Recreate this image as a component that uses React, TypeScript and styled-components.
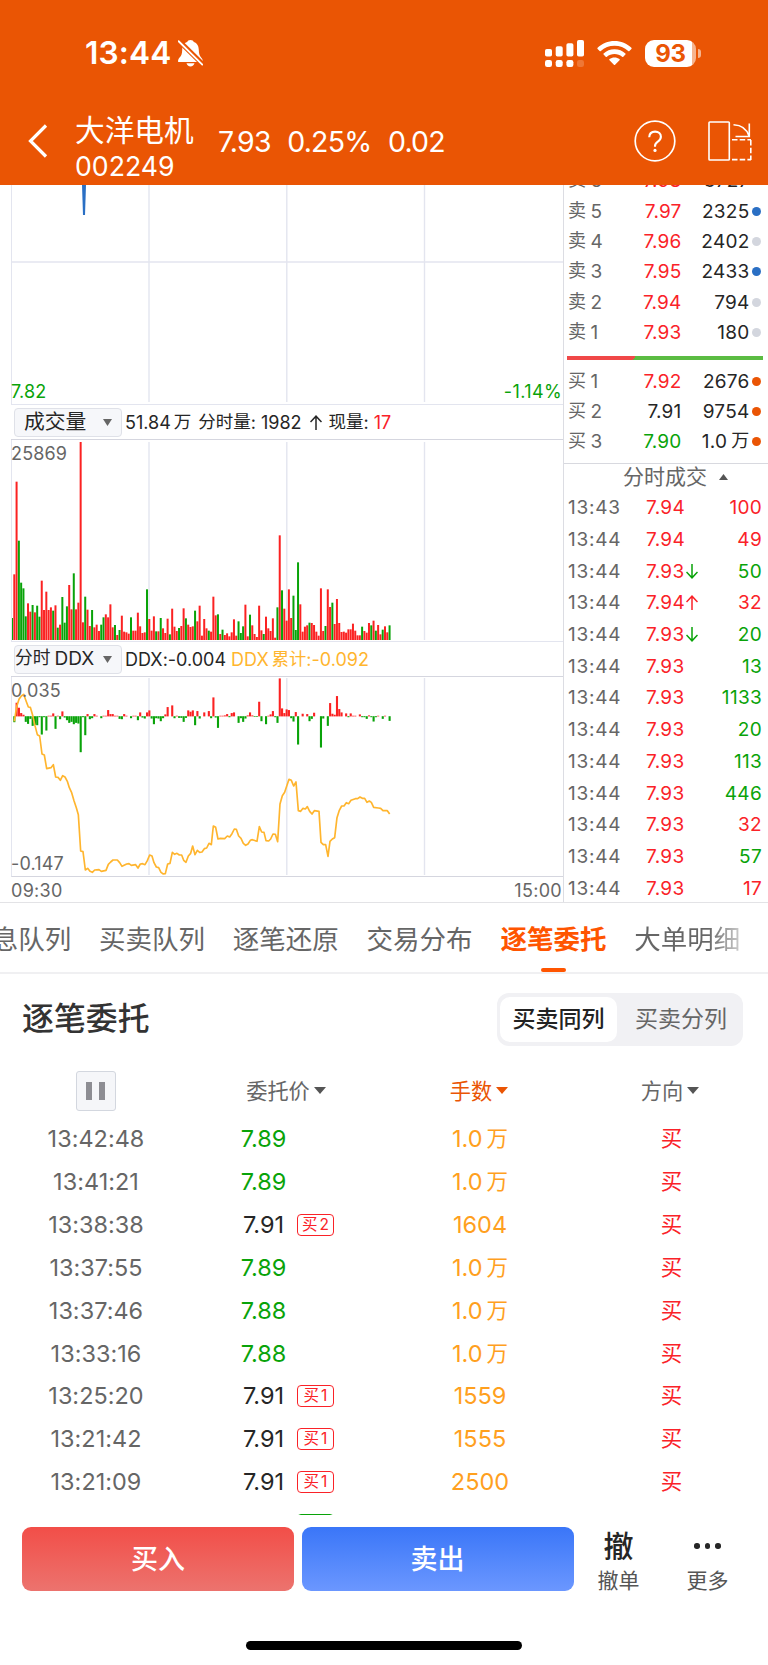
import React from "react";
import styled, { createGlobalStyle } from "styled-components";

const RED = "#fa2228";
const GREEN = "#09a309";
const GREY = "#666666";
const INK = "#262626";
const ORANGE = "#ea5504";
const AMBER = "#ffa01e";
const GRID = "#e3e5ef";

const GlobalStyle = createGlobalStyle`
  * { box-sizing: border-box; }
  body {
    margin: 0;
    background: #fff;
    color: ${INK};
    font-family: Inter, "Noto Sans CJK SC", sans-serif;
    font-feature-settings: "calt" 0;
  }
`;

const Screen = styled.div`
  width: 768px;
  height: 1665px;
  overflow: hidden;
  display: flex;
  flex-direction: column;
  background: #fff;
  white-space: nowrap;
`;

/* ---------- header ---------- */

const Header = styled.header`
  height: 185px;
  flex: none;
  background: ${ORANGE};
  color: #fff;
`;

const StatusBar = styled.div`
  height: 105px;
  padding: 1px 67px 0 85px;
  display: flex;
  align-items: center;
`;

const Clock = styled.div`
  font-size: 31.7px;
  font-weight: 600;
  letter-spacing: 0.1px;
  line-height: 40px;
  width: 93px;
`;

const StatusIcons = styled.div`
  margin-left: auto;
  display: flex;
  align-items: center;
  gap: 13px;
`;

const Battery = styled.div`
  display: flex;
  align-items: center;
  gap: 2px;
`;

const BatteryBody = styled.div`
  width: 51px;
  height: 27px;
  border-radius: 9px;
  background: linear-gradient(90deg, #fff 47px, #f6b48e 47px);
  color: ${ORANGE};
  font-size: 24px;
  font-weight: 700;
  line-height: 27px;
  text-align: center;
  letter-spacing: -0.4px;
`;

const BatteryTip = styled.div`
  width: 3px;
  height: 9px;
  border-radius: 0 4px 4px 0;
  background: #f6b48e;
`;

const TitleBar = styled.div`
  height: 80px;
  padding: 0 16px 0 28px;
  display: flex;
  align-items: flex-start;
`;

const Back = styled.div`
  width: 47px;
  padding-top: 19px;
  line-height: 0;
`;

const StockName = styled.div`
  width: 143px;
  padding-top: 6px;
`;

const NameText = styled.div`
  font-size: 29.7px;
  line-height: 36px;
  font-family: "Noto Sans CJK SC", sans-serif;
  font-weight: 400;
`;

const CodeText = styled.div`
  font-size: 26.7px;
  line-height: 32px;
  margin-top: 3px;
`;

const QuoteLine = styled.div`
  display: flex;
  gap: 16.3px;
  padding-top: 19px;
  font-size: 28.5px;
  letter-spacing: -0.75px;
  line-height: 36px;
`;

const HeaderActions = styled.div`
  margin-left: auto;
  display: flex;
  gap: 32px;
  padding-top: 15px;
`;

/* ---------- market panel ---------- */

const Market = styled.section`
  height: 718px;
  flex: none;
  display: flex;
  border-bottom: 1px solid #e3e3e6;
  overflow: hidden;
`;

const Charts = styled.div`
  width: 563px;
  padding-left: 11px;
  display: flex;
  flex-direction: column;
`;

const ChartBox = styled.div<{ $h: number; $line?: string }>`
  position: relative;
  height: ${(p) => p.$h}px;
  flex: none;
  border-left: 1px solid ${GRID};
  border-bottom: 1px solid ${(p) => p.$line || GRID};
  svg { display: block; }
`;

const ChartLabel = styled.span<{ $v: "top" | "bottom"; $right?: boolean; $color?: string }>`
  position: absolute;
  ${(p) => (p.$right ? "right: 1px;" : "left: -1px;")}
  ${(p) => (p.$v === "top" ? "top: 3px;" : "bottom: 1px;")}
  font-size: 18px;
  line-height: 22px;
  letter-spacing: ${(p) => (p.$right ? 0.4 : 0.15)}px;
  color: ${(p) => p.$color || GREY};
`;

const IndicatorBar = styled.div`
  height: 35px;
  flex: none;
  display: flex;
  align-items: center;
  border-bottom: 1px solid #d5d6df;
  font-size: 18px;
`;

const IndicatorSelect = styled.div<{ $size: number; $pad: number }>`
  width: 108px;
  height: 29px;
  margin: 0 3px 0 3px;
  padding: 0 9px 0 ${(p) => p.$pad}px;
  display: flex;
  align-items: center;
  justify-content: space-between;
  border: 1px solid #dfe1e8;
  border-radius: 4px;
  background: #f6f7fa;
  font-size: ${(p) => p.$size}px;
  line-height: 26px;
`;

const Cjk = styled.span<{ $size?: number; $ml?: number }>`
  font-size: ${(p) => (p.$size ? p.$size + "px" : "inherit")};
  margin-left: ${(p) => p.$ml || 0}px;
  vertical-align: 1px;
  line-height: 1;
`;

const Spaced = styled.span<{ $ml: number }>`
  margin-left: ${(p) => p.$ml}px;
`;

const IndicatorText = styled.span<{ $color?: string; $gap?: number }>`
  color: ${(p) => p.$color || INK};
  margin-right: ${(p) => p.$gap || 0}px;
`;

const TimeAxis = styled.div`
  height: 26px;
  display: flex;
  justify-content: space-between;
  padding-right: 1px;
  font-size: 18px;
  line-height: 27px;
  letter-spacing: 0.3px;
  color: ${GREY};
`;

const SidePanel = styled.aside`
  width: 205px;
  border-left: 1px solid #dcdde3;
  overflow: hidden;
`;

const Book = styled.div`
  height: 279px;
  overflow: hidden;
  border-bottom: 1px solid #d8d9df;
`;

const Asks = styled.div`
  margin-top: -19.3px;
`;

const BookRow = styled.div`
  height: 30.35px;
  display: flex;
  align-items: center;
  padding: 0 7px 0 4px;
  font-size: 19px;
`;

const BookLabel = styled.span`
  width: 51px;
  color: ${GREY};
`;

const BookPrice = styled.span<{ $color: string }>`
  width: 62.5px;
  text-align: right;
  letter-spacing: 0.2px;
  color: ${(p) => p.$color};
`;

const BookVolume = styled.span`
  flex: 1;
  text-align: right;
  margin-right: 2.5px;
  letter-spacing: 0.25px;
`;

const Dot = styled.i<{ $color: string }>`
  width: 9px;
  height: 9px;
  border-radius: 50%;
  background: ${(p) => p.$color};
`;

const RatioBar = styled.div`
  height: 4px;
  margin: 8.7px 5px 5.6px 3px;
  background: linear-gradient(130deg, #f04848 34.5%, #5bbc42 34.5%);
`;

const TradesTitle = styled.div`
  height: 27px;
  display: flex;
  align-items: center;
  gap: 12px;
  padding: 0 0 2px 59px;
  font-size: 21px;
  line-height: 25px;
  color: ${GREY};
`;

const TradeRow = styled.div`
  height: 31.7px;
  display: flex;
  align-items: center;
  padding: 2px 6px 0 4px;
  font-size: 19px;
`;

const TradeTime = styled.span`
  width: 78px;
  color: ${GREY};
  letter-spacing: 0.75px;
`;

const TradePrice = styled.span`
  width: 56px;
  display: flex;
  align-items: center;
  gap: 1.5px;
  letter-spacing: 0.3px;
  color: ${RED};
`;

const TradeVolume = styled.span<{ $color: string }>`
  flex: 1;
  text-align: right;
  letter-spacing: 0.3px;
  color: ${(p) => p.$color};
`;

/* ---------- tabs ---------- */

const Tabs = styled.nav`
  height: 71px;
  flex: none;
  display: flex;
  gap: 27.8px;
  padding-left: 99px;
  border-bottom: 2px solid #f0f0f2;
  overflow: hidden;
`;

const Tab = styled.div<{ $active?: boolean; $fade?: boolean; $first?: boolean }>`
  display: flex;
  flex-direction: column;
  align-items: center;
  font-size: 26.5px;
  line-height: 65px;
  flex: none;
  margin-left: ${(p) => (p.$first ? "-133.8px" : "0")};
  color: ${(p) => (p.$active ? "#ff5500" : GREY)};
  font-weight: ${(p) => (p.$active ? 700 : 400)};
  ${(p) => p.$fade && "background: linear-gradient(90deg, #666 70%, #ccc 100%); background-clip: text; color: transparent; -webkit-text-fill-color: transparent;"}
  padding-top: 4px;
`;

const Underline = styled.i`
  width: 25px;
  height: 4px;
  margin-top: -4px;
  border-radius: 2px;
  background: #ff5500;
`;

/* ---------- order list ---------- */

const Orders = styled.section`
  height: 541px;
  flex: none;
  overflow: hidden;
`;

const OrdersHead = styled.div`
  height: 90px;
  display: flex;
  align-items: center;
  justify-content: space-between;
  padding: 0 25px 0 22px;
`;

const OrdersTitle = styled.h2`
  margin: 0;
  font-size: 31.9px;
  font-weight: 500;
  line-height: 44px;
  color: #333;
`;

const Segment = styled.div`
  display: flex;
  width: 246px;
  height: 53px;
  padding: 4px 3px;
  border-radius: 12px;
  background: #f1f1f4;
`;

const SegmentItem = styled.div<{ $on?: boolean }>`
  width: ${(p) => (p.$on ? "117px" : "123px")};
  padding-left: ${(p) => (p.$on ? 0 : 5)}px;
  border-radius: 10px;
  background: ${(p) => (p.$on ? "#fff" : "transparent")};
  color: ${(p) => (p.$on ? "#222" : GREY)};
  font-weight: ${(p) => (p.$on ? 500 : 400)};
  font-size: 23px;
  line-height: 44px;
  text-align: center;
`;

const Columns = styled.div`
  display: grid;
  grid-template-columns: 192px 192px 192px 192px;
  align-items: center;
`;

const HeadRow = styled(Columns)`
  height: 53px;
  font-size: 21.2px;
  line-height: 30px;
  color: ${GREY};
`;

const HeadCell = styled.div<{ $active?: boolean; $shift?: number }>`
  display: flex;
  align-items: center;
  justify-content: center;
  gap: 4px;
  padding-right: ${(p) => p.$shift || 0}px;
  color: ${(p) => (p.$active ? ORANGE : GREY)};
`;

const PauseButton = styled.div`
  width: 40px;
  height: 40px;
  border: 1px solid #d3d7df;
  border-radius: 3px;
  background: #f5f6f9;
  display: flex;
  align-items: center;
  justify-content: center;
  gap: 7px;
`;

const PauseStroke = styled.i`
  width: 6px;
  height: 18px;
  background: #8d8d93;
`;

const OrderRow = styled(Columns)`
  height: 42.85px;
  padding-top: 2px;
  font-size: 23.5px;
  line-height: 30px;
`;

const TimeCell = styled.div`
  text-align: center;
  color: ${GREY};
  font-size: 23.4px;
  letter-spacing: 0.05px;
`;

const PriceCell = styled.div<{ $color: string }>`
  display: flex;
  align-items: center;
  color: ${(p) => p.$color};
`;

const Price = styled.span`
  width: 143px;
  text-align: center;
`;

const Badge = styled.b<{ $color: string }>`
  width: 37px;
  height: 22px;
  margin-left: -38px;
  flex: none;
  border: 1px solid ${(p) => p.$color};
  border-radius: 4px;
  color: ${(p) => p.$color};
  font-size: 15.5px;
  font-weight: 400;
  line-height: 20px;
  text-align: center;
`;

const LotsCell = styled.div`
  padding-left: 0;
  text-align: center;
  color: ${AMBER};
`;

const SideCell = styled.div`
  padding: 0 1px 2px 0;
  text-align: center;
  font-size: 21.5px;
  color: ${RED};
`;

/* ---------- bottom bar ---------- */

const BottomBar = styled.footer`
  height: 100px;
  flex: none;
  padding: 12px 0 0 22px;
  display: flex;
`;

const ActionButton = styled.div<{ $from: string; $to: string }>`
  width: 272px;
  height: 64px;
  margin-right: 7.5px;
  border-radius: 9px;
  background: linear-gradient(180deg, ${(p) => p.$from}, ${(p) => p.$to});
  color: #fff;
  font-size: 27px;
  font-weight: 500;
  line-height: 66px;
  text-align: center;
`;

const SmallAction = styled.div`
  width: 89px;
  display: flex;
  flex-direction: column;
  align-items: center;
  font-size: 21px;
  line-height: 32px;
  color: #555;
`;

const SmallActions = styled.div`
  display: flex;
  margin-left: -7px;
`;

const SmallIcon = styled.div`
  height: 38px;
  display: flex;
  align-items: center;
  gap: 5px;
  font-size: 30px;
  font-weight: 500;
  color: ${INK};
`;

const MoreDot = styled.i`
  width: 5.5px;
  height: 5.5px;
  border-radius: 50%;
  background: ${INK};
`;

const HomeArea = styled.div`
  flex: 1;
  display: flex;
  justify-content: center;
  padding-top: 26px;
`;

const HomeIndicator = styled.div`
  width: 276px;
  height: 9px;
  border-radius: 5px;
  background: #000;
`;

/* ---------- data ---------- */

// Minute volumes, 594 = the day's peak; a negative sign marks a falling minute.
const VOLUMES = [
  -66, 197, 475, -298, -172, -155, -71, 110, 85, -105, 83, -103, -70, 178, 90, 145, 90, 98, -88, 104,
  -37, 46, -129, -52, -101, 165, 92, -200, 92, 112, 594, 53, -130, 91, 42, -90, 38, 46, 27, -46,
  -68, 77, 68, 107, 38, -45, 15, -30, 73, 25, 23, 19, -68, 28, 28, 82, 41, 21, 23, -152,
  63, 28, 71, -26, 26, -66, 35, 21, 64, -17, 94, 40, 27, -36, 42, 95, -65, 46, 39, 41,
  -88, 56, 103, 13, 63, 35, -28, 25, 130, 74, -77, 18, -31, 15, 20, 11, 23, 62, 13, -56,
  -21, -41, 106, 11, -76, 44, 18, 9, 103, 29, -18, 70, 35, 27, 65, 7, -98, 314, -149, 94,
  58, 152, 66, -133, -30, -233, 107, 25, 40, 44, -52, 51, 45, 25, 13, 155, 27, -42, 152, 99,
  -112, 48, 123, 51, 24, 25, 22, 32, 32, 49, 28, 14, 14, -40, 27, 22, 51, -44, 58, -28,
  45, 17, -31, 41, 23, -44,
];

// Per-minute DDX as [minute, value].
const DDX: [number, number][] = [
  [1, -18], [2, 41], [3, 26], [4, 10], [5, 5], [6, -17], [7, -23], [8, -8], [9, -29], [10, -26], [11, -27],
  [12, -3], [13, -55], [14, -3], [15, -43], [16, 2], [17, 2], [18, 9], [19, -38], [20, 2], [21, -9], [22, 15],
  [23, -4], [24, -12], [25, -20], [26, -17], [27, -24], [28, -20], [29, -22], [30, -108], [31, -3], [32, -57],
  [33, 7], [34, -9], [35, -6], [36, 7], [37, 2], [39, -6], [40, 2], [41, 2], [42, 19], [43, 7], [44, 7],
  [45, 2], [46, 2], [47, -8], [48, -9], [49, 7], [50, 2], [52, -6], [53, 2], [54, 2], [55, -12], [56, 12],
  [57, -4], [58, -7], [59, 12], [60, 18], [61, -7], [62, -24], [63, -6], [64, -7], [65, -15], [66, -6],
  [67, 6], [68, 28], [70, 33], [71, -6], [72, 2], [73, -5], [74, -5], [75, -17], [76, -5], [77, 18], [78, 14],
  [79, 18], [80, -27], [81, 16], [82, -7], [84, 12], [86, 16], [87, -6], [88, 57], [89, -4], [90, -35],
  [91, 2], [92, 2], [93, 3], [94, 7], [95, -3], [96, 10], [97, 12], [99, -20], [100, -6], [101, -17],
  [102, -7], [103, 3], [104, 12], [105, 3], [106, -2], [107, -2], [108, 44], [109, -15], [111, -24],
  [112, 2], [113, 6], [114, 16], [115, -3], [116, -20], [117, 114], [118, 24], [119, 10], [120, 21],
  [121, 19], [122, -6], [123, -16], [124, 13], [125, -85], [127, 8], [129, 7], [130, -15], [131, -8],
  [132, 11], [135, -94], [136, -7], [138, -29], [139, 40], [140, 8], [141, 5], [142, 61], [143, 22],
  [144, 12], [146, 9], [147, -3], [148, 9], [149, 2], [150, 2], [152, 6], [153, -3], [154, -3], [155, -8],
  [156, 3], [157, -3], [158, -16], [159, -3], [160, 2], [162, -8], [163, 2], [165, -14],
];

const DDX_TOTAL =
  "43,244 50,200 57,178 64,168 71,163 78,182 85,201 91,202 98,226 105,257 112,284 119,288 126,342 133,345 140,386 153,383 160,374 167,411 174,412 181,421 188,407 195,411 202,424 208,443 215,458 222,482 229,503 235,524 242,633 249,635 256,690 263,685 270,694 277,697 284,690 297,689 304,694 318,691 325,673 332,666 339,660 352,660 359,668 366,679 380,672 387,671 394,676 407,674 414,684 421,672 428,671 435,674 442,662 449,645 456,648 462,668 469,681 476,683 483,697 490,702 496,701 503,672 510,670 517,637 524,643 531,640 538,645 545,645 551,661 558,667 565,648 572,640 578,618 585,644 592,631 599,637 606,636 613,626 620,624 627,610 634,614 640,558 647,562 654,597 661,595 674,596 682,588 689,591 696,581 703,567 709,568 716,588 723,595 730,610 737,616 744,612 751,601 757,599 771,604 778,560 785,576 792,577 798,602 806,603 812,597 819,582 826,583 833,605 840,492 847,467 854,457 861,436 867,418 874,421 881,438 888,426 895,512 902,514 909,505 916,507 922,500 929,514 936,522 943,512 957,514 963,607 970,614 977,614 984,649 990,604 997,597 1004,593 1011,533 1018,511 1025,498 1032,498 1039,488 1046,491 1053,481 1066,476 1073,476 1080,471 1087,475 1094,475 1101,487 1108,483 1114,487 1121,502 1135,504 1142,505 1149,512 1162,512 1169,522";

const STEP = 2.2883;

const ASKS = [
  ["6", "7.98", "3727", ""],
  ["5", "7.97", "2325", "#2a6fc4"],
  ["4", "7.96", "2402", "#d3d6de"],
  ["3", "7.95", "2433", "#2a6fc4"],
  ["2", "7.94", "794", "#d3d6de"],
  ["1", "7.93", "180", "#d3d6de"],
];

const BIDS = [
  ["1", "7.92", "2676", RED],
  ["2", "7.91", "9754", INK],
  ["3", "7.90", "1.0万", GREEN],
];

const TRADES: [string, string, string, string, ("up" | "down")?][] = [
  ["13:43", "7.94", "100", RED],
  ["13:44", "7.94", "49", RED],
  ["13:44", "7.93", "50", GREEN, "down"],
  ["13:44", "7.94", "32", RED, "up"],
  ["13:44", "7.93", "20", GREEN, "down"],
  ["13:44", "7.93", "13", GREEN],
  ["13:44", "7.93", "1133", GREEN],
  ["13:44", "7.93", "20", GREEN],
  ["13:44", "7.93", "113", GREEN],
  ["13:44", "7.93", "446", GREEN],
  ["13:44", "7.93", "32", RED],
  ["13:44", "7.93", "57", GREEN],
  ["13:44", "7.93", "17", RED],
];

const ORDERS: [string, string, string, string?][] = [
  ["13:42:48", "7.89", "1.0万"],
  ["13:41:21", "7.89", "1.0万"],
  ["13:38:38", "7.91", "1604", "2"],
  ["13:37:55", "7.89", "1.0万"],
  ["13:37:46", "7.88", "1.0万"],
  ["13:33:16", "7.88", "1.0万"],
  ["13:25:20", "7.91", "1559", "1"],
  ["13:21:42", "7.91", "1555", "1"],
  ["13:21:09", "7.91", "2500", "1"],
];

/* ---------- small pieces ---------- */

const Amount = ({ value, gap, size }: { value: string; gap: number; size: number }) =>
  value.endsWith("万") ? (
    <>
      {value.slice(0, -1)}
      <Cjk $ml={gap} $size={size}>万</Cjk>
    </>
  ) : (
    <>{value}</>
  );

const Triangle = ({ w, h, color, up }: { w: number; h: number; color: string; up?: boolean }) => (
  <svg width={w} height={h} viewBox="0 0 10 10" preserveAspectRatio="none">
    <path d={up ? "M0 10L5 0L10 10Z" : "M0 0H10L5 10Z"} fill={color} />
  </svg>
);

const Arrow = ({ dir, color }: { dir: "up" | "down"; color: string }) => (
  <svg width="12" height="15" viewBox="0 0 12 15" fill="none" stroke={color} strokeWidth="1.5">
    <path d={dir === "up" ? "M6 15V1.5M0.5 7L6 1.2L11.500 7" : "M6 0V13.5M0.5 8L6 13.800L11.500 8"} />
  </svg>
);

const GridLines = ({ top, bottom }: { top: number; bottom: number }) => (
  <g stroke={GRID} strokeWidth="1.4">
    {[137, 274.8, 412.5].map((x) => (
      <line key={x} x1={x} x2={x} y1={top} y2={bottom} />
    ))}
  </g>
);

const BellOff = () => (
  <svg width="25" height="28" viewBox="0 0 25 28">
    <path
      fill="#fff"
      d="M12.500 1c-1.700 0-3 .8-3.300 1.900C5.300 4.200 4.300 7.500 4.200 11c-.1 4.200-1 5.800-2.600 7.600C.4 20-.2 21.600.2 23h24.400c.4-1.400-.1-3-1.300-4.300-1.600-1.800-2.400-3.500-2.500-7.700-.1-3.500-1.200-6.800-5-8.100C15.500 1.800 14.200 1 12.500 1zM8.500 24.300h8c-.5 2-2 3.100-4 3.100s-3.500-1.100-4-3.100z"
    />
    <path d="M0 1L25 25.500" stroke={ORANGE} strokeWidth="5" />
    <path d="M.6 2.300L24.300 25.600" stroke="#fff" strokeWidth="1.900" strokeLinecap="round" />
  </svg>
);

const Signal = () => (
  <svg width="39" height="27" viewBox="0 0 39 27" fill="#fff">
    <rect x="0" y="9" width="7" height="7.500" rx="1.800" />
    <rect x="10.700" y="6.300" width="7" height="10.200" rx="1.800" />
    <rect x="21.400" y="3.300" width="7" height="13.200" rx="1.800" />
    <rect x="32" y="0" width="7" height="16.500" rx="1.800" />
    <rect x="0" y="20" width="7" height="7" rx="2.200" />
    <rect x="10.700" y="20" width="7" height="7" rx="2.200" />
    <rect x="21.400" y="20" width="7" height="7" rx="2.200" />
    <rect x="32" y="20" width="7" height="7" rx="2.200" opacity=".2" />
  </svg>
);

const Wifi = () => (
  <svg width="35" height="26" viewBox="0 0 35 26" fill="#fff">
    <path d="M17.500 1C11 1 5 3.500.6 7.700c-.4.4-.4.8 0 1.200l2 2c.4.4.8.4 1.200 0C7.500 7.600 12.300 5.700 17.500 5.700s10 1.900 13.700 5.200c.4.4.8.4 1.200 0l2-2c.4-.4.400-.8 0-1.200C30 3.500 24 1 17.500 1z" />
    <path d="M17.500 9.200c-4.200 0-8 1.600-10.900 4.200-.4.4-.4.800 0 1.200l2.100 2.100c.4.4.8.3 1.200 0 2.100-1.800 4.700-2.800 7.600-2.800s5.500 1 7.600 2.800c.4.3.8.4 1.200 0l2.100-2.100c.4-.4.400-.8 0-1.200C25.500 10.800 21.700 9.200 17.500 9.200z" />
    <path d="M17.500 17.400c-1.900 0-3.600.6-5 1.700-.4.400-.4.800 0 1.200l4.400 4.400c.4.400.8.400 1.200 0l4.400-4.400c.4-.4.400-.8 0-1.200-1.400-1.100-3.100-1.700-5-1.700z" />
  </svg>
);

const Help = () => (
  <svg width="42" height="42" viewBox="0 0 42 42" fill="none" stroke="#fff" strokeWidth="1.700">
    <circle cx="21" cy="21" r="19.800" />
    <path d="M15.200 17.300c.1-3.400 2.400-5.700 5.900-5.700s5.800 2.200 5.800 5.100c0 2.400-1.200 3.600-3.100 4.900-2 1.300-2.800 2.300-2.800 4.500v.7" strokeWidth="2.100" />
    <circle cx="21" cy="30.400" r="1.600" fill="#fff" stroke="none" />
  </svg>
);

const Rotate = () => (
  <svg width="44" height="42" viewBox="0 0 44 42" fill="none" stroke="#fff" strokeWidth="1.600">
    <rect x="1" y="2" width="20.300" height="38" rx="0.800" />
    <path d="M25.500 4.700C33 5 38.500 8 41 16M41.300 3.500V16.500H27.500" />
    <path d="M24 19.700H43M42.800 20V40M24 39.600H43" strokeDasharray="5.500 2.200" />
  </svg>
);

export default function App() {
  return (
    <Screen>
      <GlobalStyle />
      <Header>
        <StatusBar>
          <Clock>13:44</Clock>
          <BellOff />
          <StatusIcons>
            <Signal />
            <Wifi />
            <Battery>
              <BatteryBody>93</BatteryBody>
              <BatteryTip />
            </Battery>
          </StatusIcons>
        </StatusBar>
        <TitleBar>
          <Back>
            <svg width="20" height="34" viewBox="0 0 20 34" fill="none" stroke="#fff" strokeWidth="3.200">
              <path d="M18 1.500L2.500 17L18 32.500" />
            </svg>
          </Back>
          <StockName>
            <NameText>大洋电机</NameText>
            <CodeText>002249</CodeText>
          </StockName>
          <QuoteLine>
            <span>7.93</span>
            <span>0.25%</span>
            <span>0.02</span>
          </QuoteLine>
          <HeaderActions>
            <Help />
            <Rotate />
          </HeaderActions>
        </TitleBar>
      </Header>

      <Market>
        <Charts>
          <ChartBox $h={220}>
            <svg width="551" height="219">
              <GridLines top={0} bottom={217} />
              <line x1="0" x2="551" y1="77" y2="77" stroke={GRID} strokeWidth="1.400" />
              <path d="M70 0H74L73 30H71Z" fill="#2a6fc4" />
            </svg>
            <ChartLabel $v="bottom" $color={GREEN}>7.82</ChartLabel>
            <ChartLabel $v="bottom" $color={GREEN} $right>-1.14%</ChartLabel>
          </ChartBox>
          <IndicatorBar>
            <IndicatorSelect $size={20.8} $pad={9}>
              成交量
              <Triangle w={9} h={7} color="#666" />
            </IndicatorSelect>
            <IndicatorText $gap={7}>51.84<Cjk $ml={3} $size={17.5}>万</Cjk></IndicatorText>
            <IndicatorText $gap={5}><Cjk $size={17.5}>分时量</Cjk>:</IndicatorText>
            <IndicatorText $gap={8}>1982</IndicatorText>
            <Arrow dir="up" color={INK} />
            <IndicatorText $gap={5}><Cjk $size={17.5} $ml={7}>现量</Cjk>:</IndicatorText>
            <IndicatorText $color={RED}>17</IndicatorText>
          </IndicatorBar>
          <ChartBox $h={202}>
            <svg width="551" height="200">
              <GridLines top={2} bottom={200} />
              {VOLUMES.map((v, i) => (
                <rect
                  key={i}
                  x={i * STEP - 1}
                  y={200 - Math.abs(v) / 3}
                  width={2}
                  height={Math.abs(v) / 3}
                  fill={v > 0 ? "#fb2222" : GREEN}
                />
              ))}
            </svg>
            <ChartLabel $v="top">25869</ChartLabel>
          </ChartBox>
          <IndicatorBar>
            <IndicatorSelect $size={19} $pad={0}>
              <span><Cjk $size={17.8}>分时</Cjk><Spaced $ml={4}>DDX</Spaced></span>
              <Triangle w={9} h={7} color="#666" />
            </IndicatorSelect>
            <IndicatorText $gap={5}>DDX:-0.004</IndicatorText>
            <IndicatorText $color="#ffb52e">DDX<Cjk $ml={3} $size={17.3}>累计</Cjk>:-0.092</IndicatorText>
          </IndicatorBar>
          <ChartBox $h={200} $line="#d5d6df">
            <svg width="551" height="199">
              <GridLines top={1} bottom={198} />
              {DDX.map(([m, v]) => (
                <rect
                  key={m}
                  x={m * STEP - 1}
                  y={v > 0 ? 39.4 - v / 3 : 39.2}
                  width={2.1}
                  height={Math.abs(v) / 3}
                  fill={v > 0 ? "#fb2222" : GREEN}
                />
              ))}
              <polyline
                points={DDX_TOTAL}
                transform="translate(-12 -37) scale(0.33333)"
                fill="none"
                stroke="#ffb52e"
                strokeWidth="5"
                strokeLinejoin="round"
              />
            </svg>
            <ChartLabel $v="top">0.035</ChartLabel>
            <ChartLabel $v="bottom">-0.147</ChartLabel>
          </ChartBox>
          <TimeAxis>
            <span>09:30</span>
            <span>15:00</span>
          </TimeAxis>
        </Charts>

        <SidePanel>
          <Book>
            <Asks>
              {ASKS.map(([n, price, vol, dot]) => (
                <BookRow key={n}>
                  <BookLabel><Cjk $size={18}>卖</Cjk><Spaced $ml={4.5}>{n}</Spaced></BookLabel>
                  <BookPrice $color={RED}>{price}</BookPrice>
                  <BookVolume>{vol}</BookVolume>
                  <Dot $color={dot || "transparent"} />
                </BookRow>
              ))}
            </Asks>
            <RatioBar />
            {BIDS.map(([n, price, vol, color]) => (
              <BookRow key={n}>
                <BookLabel><Cjk $size={18}>买</Cjk><Spaced $ml={4.5}>{n}</Spaced></BookLabel>
                <BookPrice $color={color}>{price}</BookPrice>
                <BookVolume><Amount value={vol} gap={4} size={18} /></BookVolume>
                <Dot $color={ORANGE} />
              </BookRow>
            ))}
          </Book>
          <TradesTitle>
            分时成交
            <Triangle w={9} h={6} color="#555" up />
          </TradesTitle>
          {TRADES.map(([time, price, vol, color, dir], i) => (
            <TradeRow key={i}>
              <TradeTime>{time}</TradeTime>
              <TradePrice>
                {price}
                {dir && <Arrow dir={dir} color={dir === "up" ? RED : GREEN} />}
              </TradePrice>
              <TradeVolume $color={color}>{vol}</TradeVolume>
            </TradeRow>
          ))}
        </SidePanel>
      </Market>

      <Tabs>
        <Tab $first>信息队列</Tab>
        <Tab>买卖队列</Tab>
        <Tab>逐笔还原</Tab>
        <Tab>交易分布</Tab>
        <Tab $active>
          逐笔委托
          <Underline />
        </Tab>
        <Tab $fade>大单明细</Tab>
      </Tabs>

      <Orders>
        <OrdersHead>
          <OrdersTitle>逐笔委托</OrdersTitle>
          <Segment>
            <SegmentItem $on>买卖同列</SegmentItem>
            <SegmentItem>买卖分列</SegmentItem>
          </Segment>
        </OrdersHead>
        <HeadRow>
          <HeadCell $shift={1}>
            <PauseButton>
              <PauseStroke />
              <PauseStroke />
            </PauseButton>
          </HeadCell>
          <HeadCell $shift={4}>委托价<Triangle w={12} h={7} color="#555" /></HeadCell>
          <HeadCell $shift={2} $active>手数<Triangle w={12} h={7} color={ORANGE} /></HeadCell>
          <HeadCell $shift={4}>方向<Triangle w={12} h={7} color="#555" /></HeadCell>
        </HeadRow>
        {ORDERS.map(([time, price, lots, level]) => (
          <OrderRow key={time}>
            <TimeCell>{time}</TimeCell>
            <PriceCell $color={level ? INK : GREEN}>
              <Price>{price}</Price>
              {level && <Badge $color={RED}>买<Spaced $ml={2}>{level}</Spaced></Badge>}
            </PriceCell>
            <LotsCell><Amount value={lots} gap={4} size={21.5} /></LotsCell>
            <SideCell>买</SideCell>
          </OrderRow>
        ))}
        <OrderRow>
          <TimeCell />
          <PriceCell $color={INK}>
            <Price />
            <Badge $color={GREEN} />
          </PriceCell>
        </OrderRow>
      </Orders>

      <BottomBar>
        <ActionButton $from="#f24e48" $to="#ec736e">买入</ActionButton>
        <ActionButton $from="#3a76f8" $to="#6b97ff">卖出</ActionButton>
        <SmallActions>
          <SmallAction>
            <SmallIcon>撤</SmallIcon>
            撤单
          </SmallAction>
          <SmallAction>
            <SmallIcon>
              <MoreDot />
              <MoreDot />
              <MoreDot />
            </SmallIcon>
            更多
          </SmallAction>
        </SmallActions>
      </BottomBar>
      <HomeArea>
        <HomeIndicator />
      </HomeArea>
    </Screen>
  );
}
